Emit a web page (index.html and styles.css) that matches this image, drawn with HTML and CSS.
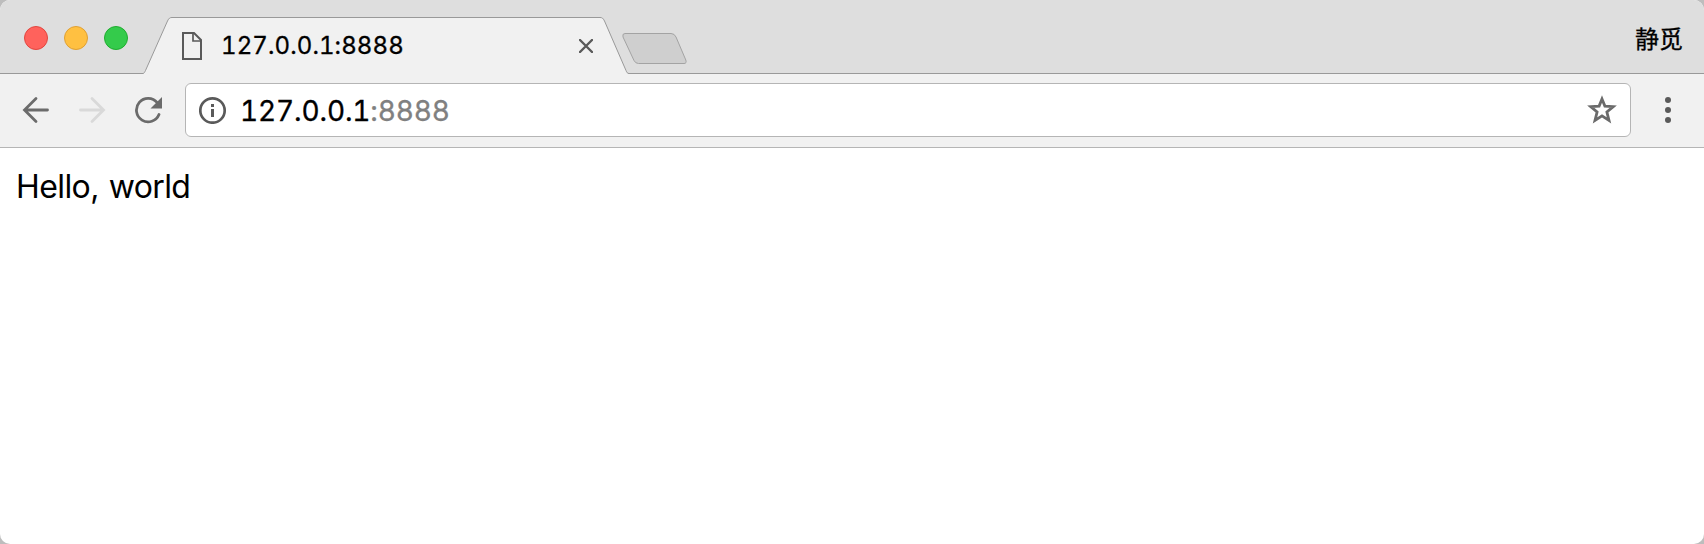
FILE: index.html
```html
<!DOCTYPE html>
<html lang="zh-CN">
<head>
<meta charset="utf-8">
<title>127.0.0.1:8888</title>
<link rel="stylesheet" href="styles.css">
</head>
<body>
<div class="window">
  <header class="tabstrip">
    <div class="lights"><span class="light red"></span><span class="light yellow"></span><span class="light green"></span></div>
    <div class="tab">
      <svg class="tab-shape" width="488" height="58" viewBox="0 0 488 58"><path d="M0 56.500C1 56.500 1.800 55 2.500 53.500L24.500 4C26 1 27 .5 29 .5H457C459 .5 460 1 461.500 4L483 53.500C483.800 55.500 484.500 56.500 486 56.500V58H0Z" fill="#f1f1f1"/><path d="M0 56.500C1 56.500 1.800 55 2.500 53.500L24.500 4C26 1 27 .5 29 .5H457C459 .5 460 1 461.500 4L483 53.500C483.800 55.500 484.500 56.500 486 56.500H488" fill="none" stroke="#999"/></svg>
      <svg class="page-icon" width="20" height="28" viewBox="0 0 20 28"><path d="M1 1H12L19 8V27H1Z" fill="none" stroke="#5a5a5a" stroke-width="2"/><path d="M11 1V9H19" fill="none" stroke="#5a5a5a" stroke-width="1.700"/></svg>
      <span class="tab-title">127.0.0.1:8888</span>
      <svg class="close" width="14" height="14" viewBox="0 0 14 14"><path d="M1 1L13 13M13 1L1 13" stroke="#5a5a5a" stroke-width="2.400" stroke-linecap="round"/></svg>
    </div>
    <svg class="new-tab" width="66" height="32" viewBox="0 0 66 32"><path d="M4 .5H50Q53.500 .5 55 4L64.800 27Q66 30.500 63 30.500H17.500Q14.500 30.500 13 27.500L2 4Q1 .5 4 .5Z" fill="#cfcfcf" stroke="#a3a3a3" stroke-width="1"/></svg>
    <span class="profile">静觅</span>
  </header>
  <nav class="toolbar">
    <svg class="back" width="28" height="28" viewBox="0 0 28 28"><path d="M14 2.500L2.500 14L14 25.500M3 14H25.500" fill="none" stroke="#6b6b6b" stroke-width="2.800" stroke-linecap="round"/></svg>
    <svg class="forward" width="28" height="28" viewBox="0 0 28 28"><path d="M14 2.500L25.500 14L14 25.500M25 14H2.500" fill="none" stroke="#d9d9d9" stroke-width="2.800" stroke-linecap="round"/></svg>
    <svg class="reload" width="28" height="28" viewBox="0 0 28 28"><path d="M23.200 6.700A11.700 11.700 0 1 0 25 18.500" fill="none" stroke="#6b6b6b" stroke-width="2.800" stroke-linecap="round"/><path d="M28 1V12.500H16.500Z" fill="#6b6b6b"/></svg>
    <div class="address">
      <svg class="info" width="28" height="28" viewBox="0 0 28 28"><circle cx="13.500" cy="14.500" r="12.200" fill="none" stroke="#5a5a5a" stroke-width="2.700"/><path d="M12 8h3v3h-3zM12 13h3v8h-3z" fill="#5a5a5a"/></svg>
      <span class="url">127.0.0.1<span class="port">:8888</span></span>
      <svg class="star" width="30" height="30" viewBox="0 0 30 30"><path d="M15 4L17.900 11.100L26.300 11.700L19.900 17L22 25.400L15 20.900L8 25.400L10.100 17L3.700 11.700L12.100 11.100Z" fill="none" stroke="#6b6b6b" stroke-width="2.800"/></svg>
    </div>
    <svg class="menu" width="6" height="28" viewBox="0 0 6 28"><circle cx="3" cy="4" r="3" fill="#5a5a5a"/><circle cx="3" cy="14" r="3" fill="#5a5a5a"/><circle cx="3" cy="24" r="3" fill="#5a5a5a"/></svg>
  </nav>
  <main class="page">Hello, world</main>
</div>
</body>
</html>
```
FILE: styles.css
```css
* { box-sizing: border-box; }
body { margin: 0; background: #bdbdbd; font-family: Inter, "Noto Sans CJK SC", sans-serif; color: #000; }
svg { display: block; flex: none; }
.window { display: flex; flex-direction: column; height: 544px; border-radius: 10px; overflow: hidden; background: #fff; }
.tabstrip { display: flex; align-items: flex-start; height: 74px; background: #dedede; border-bottom: 1px solid #999; padding-left: 24px; }
.lights { display: flex; gap: 16px; padding-top: 26px; width: 119px; }
.light { width: 24px; height: 24px; border-radius: 50%; border: 1px solid; }
.red { background: #ff625c; border-color: #e2463f; }
.yellow { background: #ffc041; border-color: #dfa034; }
.green { background: #34cb4b; border-color: #1fad2f; }
.tab { position: relative; display: flex; align-items: center; width: 488px; height: 58px; margin: 17px 0 -2px; padding: 0 34px 0 39px; }
.tab-shape { position: absolute; left: 0; top: 0; }
.page-icon, .tab-title, .close { position: relative; }
.tab-title { margin-left: 19px; flex: 1; font-size: 24px; -webkit-text-stroke: 0.3px; font-variant-numeric: tabular-nums; letter-spacing: 0.1px; line-height: 28px; white-space: nowrap; }
.close { margin-right: 4px; }
.new-tab { margin: 33px 0 0 -10px; }
.profile { margin: 21px 21px 0 auto; font: 24px/34px "Noto Sans CJK SC", sans-serif; -webkit-text-stroke: 0.3px; }
.toolbar { display: flex; align-items: center; height: 74px; background: #f1f1f1; border-bottom: 1px solid #b5b5b5; padding: 0 33px 2px 22px; }
.forward { margin-left: 28px; }
.reload { margin-left: 28px; }
.address { display: flex; align-items: center; flex: 1; height: 54px; margin: 0 34px 0 23px; padding: 0 13px; background: #fff; border: 1px solid #b5b5b5; border-radius: 6px; }
.url { flex: 1; margin-left: 13px; padding-top: 2px; font-size: 28px; -webkit-text-stroke: 0.3px; font-variant-numeric: tabular-nums; letter-spacing: -0.13px; line-height: 34px; }
.port { color: #808080; }
.page { padding: 19px 16px; font-size: 32px; line-height: 40px; letter-spacing: -0.6px; word-spacing: 1.5px; }
```
